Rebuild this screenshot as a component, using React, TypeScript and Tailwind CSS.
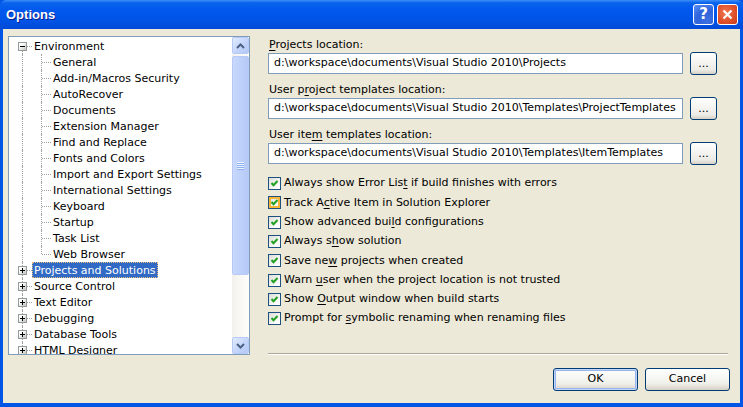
import React from 'react';

const FONT = "font-['Tahoma','DejaVu_Sans',sans-serif]";

type TreeRow = {
  label: string;
  level: 0 | 1;
  expander?: '+' | '-';
  last?: boolean;
  selected?: boolean;
};

const TREE: TreeRow[] = [
  { label: 'Environment', level: 0, expander: '-' },
  { label: 'General', level: 1 },
  { label: 'Add-in/Macros Security', level: 1 },
  { label: 'AutoRecover', level: 1 },
  { label: 'Documents', level: 1 },
  { label: 'Extension Manager', level: 1 },
  { label: 'Find and Replace', level: 1 },
  { label: 'Fonts and Colors', level: 1 },
  { label: 'Import and Export Settings', level: 1 },
  { label: 'International Settings', level: 1 },
  { label: 'Keyboard', level: 1 },
  { label: 'Startup', level: 1 },
  { label: 'Task List', level: 1 },
  { label: 'Web Browser', level: 1, last: true },
  { label: 'Projects and Solutions', level: 0, expander: '+', selected: true },
  { label: 'Source Control', level: 0, expander: '+' },
  { label: 'Text Editor', level: 0, expander: '+' },
  { label: 'Debugging', level: 0, expander: '+' },
  { label: 'Database Tools', level: 0, expander: '+' },
  { label: 'HTML Designer', level: 0, expander: '+' },
];

// label with one underlined mnemonic letter
function Mn({ text, at }: { text: string; at: number }) {
  return (
    <>
      {text.slice(0, at)}
      <span className="underline underline-offset-2">{text.charAt(at)}</span>
      {text.slice(at + 1)}
    </>
  );
}

const CHECKS: { text: string; at: number; hot?: boolean }[] = [
  { text: 'Always show Error List if build finishes with errors', at: 21 },
  { text: 'Track Active Item in Solution Explorer', at: 7, hot: true },
  { text: 'Show advanced build configurations', at: 17 },
  { text: 'Always show solution', at: 8 },
  { text: 'Save new projects when created', at: 7 },
  { text: 'Warn user when the project location is not trusted', at: 5 },
  { text: 'Show Output window when build starts', at: 5 },
  { text: 'Prompt for symbolic renaming when renaming files', at: 11 },
];

function Expander({ sign }: { sign: '+' | '-' }) {
  return (
    <div className="relative z-10 w-[9px] h-[9px] border border-[#919B9C] bg-[linear-gradient(135deg,#ffffff_30%,#c6c3b6_100%)] flex items-center justify-center">
      <div className="relative w-[5px] h-[5px]">
        <div className="absolute left-0 top-[2px] w-[5px] h-px bg-black" />
        {sign === '+' && <div className="absolute left-[2px] top-0 w-px h-[5px] bg-black" />}
      </div>
    </div>
  );
}

function Row({ row, index }: { row: TreeRow; index: number }) {
  const isFirst = index === 0;
  return (
    <div className="flex h-4 items-center shrink-0">
      {/* root level cell */}
      <div className="relative w-[19px] h-4 flex items-center justify-center">
        <div
          className={`absolute left-[9px] w-0 border-l border-dotted border-[#A0A0A0] ${
            isFirst ? 'top-[8px] bottom-0' : 'top-0 bottom-0'
          }`}
        />
        {row.level === 0 && (
          <div className="absolute left-[10px] right-0 top-[8px] h-0 border-t border-dotted border-[#A0A0A0]" />
        )}
        {row.expander && <Expander sign={row.expander} />}
      </div>
      {row.level === 1 && (
        <div className="relative w-[19px] h-4">
          <div
            className={`absolute left-[9px] w-0 border-l border-dotted border-[#A0A0A0] ${
              row.last ? 'top-0 h-[8px]' : 'top-0 bottom-0'
            }`}
          />
          <div className="absolute left-[10px] right-0 top-[8px] h-0 border-t border-dotted border-[#A0A0A0]" />
        </div>
      )}
      <div
        className={`h-4 px-[2px] flex items-center whitespace-nowrap leading-none ${
          row.selected
            ? 'bg-[#316AC5] text-white outline outline-1 outline-dotted outline-[#E8C080] -outline-offset-1'
            : 'text-black'
        }`}
      >
        {row.label}
      </div>
    </div>
  );
}

function ScrollArrow({ dir }: { dir: 'up' | 'down' }) {
  return (
    <div className="w-[17px] h-[17px] rounded-[2px] border border-[#B7CAF5] bg-[linear-gradient(135deg,#E2EBFE_0%,#C1D3FB_60%,#B4C8F6_100%)] flex items-center justify-center shrink-0">
      <svg width="9" height="6" viewBox="0 0 9 6">
        <polyline
          points={dir === 'up' ? '1,5 4.5,1.5 8,5' : '1,1 4.5,4.5 8,1'}
          fill="none"
          stroke="#4D6185"
          strokeWidth="2"
        />
      </svg>
    </div>
  );
}

function Scrollbar() {
  return (
    <div className="w-[17px] flex flex-col bg-[linear-gradient(to_right,#F3F1EC,#FEFEFB)] shrink-0">
      <ScrollArrow dir="up" />
      <div className="mt-[2px] h-[219px] rounded-[2px] border border-[#B7CAF5] bg-[linear-gradient(to_right,#C9D8FC,#BED1FB_50%,#B5C9F7)] flex items-center justify-center">
        <div className="flex flex-col gap-px">
          {[0, 1, 2, 3].map((i) => (
            <div key={i} className="w-[7px] h-px bg-[#EEF4FE] shadow-[0_1px_0_#8CB0F8]" />
          ))}
        </div>
      </div>
      <div className="flex-1" />
      <ScrollArrow dir="down" />
    </div>
  );
}

function CheckBox({ hot }: { hot?: boolean }) {
  return (
    <div className="w-[13px] h-[13px] border border-[#1C5180] bg-[linear-gradient(135deg,#DCDCD7_0%,#FFFFFF_85%)] shrink-0 relative">
      {hot && <div className="absolute inset-0 border-2 border-[#F8B636]" />}
      <svg className="absolute inset-0" width="11" height="11" viewBox="0 0 11 11">
        <polyline points="2.5,5 4.5,7.2 8.5,3" fill="none" stroke="#21A121" strokeWidth="2" />
      </svg>
    </div>
  );
}

function PathField({ label, value }: { label: React.ReactNode; value: string }) {
  return (
    <div className="flex flex-col">
      <div className="h-[13px] leading-[13px] pl-px mb-px">{label}</div>
      <div className="flex items-center gap-[7px]">
        <div className="w-[415px] h-[21px] border border-[#7F9DB9] bg-white flex items-center px-[5px] overflow-hidden whitespace-nowrap">
          {value}
        </div>
        <button className="w-[27px] h-[23px] rounded-[3px] border border-[#003C74] bg-[linear-gradient(to_bottom,#FFFFFF,#ECEBE6_80%,#D6D0C5)] flex items-end justify-center pb-[5px] leading-none">
          ...
        </button>
      </div>
    </div>
  );
}

function DlgButton({ children, def }: { children: React.ReactNode; def?: boolean }) {
  return (
    <button
      className={`w-[85px] h-[23px] rounded-[3px] border border-[#003C74] bg-[linear-gradient(to_bottom,#FFFFFF,#F0F0EA_70%,#D6D0C5)] flex items-center justify-center ${
        def ? 'shadow-[inset_0_0_0_1px_#C4D5FA,inset_0_0_0_2px_#98B6EE]' : ''
      }`}
    >
      {children}
    </button>
  );
}

export default function App() {
  return (
    <div className={`w-[743px] h-[407px] flex flex-col bg-[#0055E5] text-[11px] text-black ${FONT} overflow-hidden`}>
      {/* Title bar */}
      <div className="h-[29px] shrink-0 flex items-center pl-[6px] pr-[5px] rounded-t-[6px] bg-[linear-gradient(to_bottom,#3C8EF8_0%,#0A62EC_10%,#0058EE_35%,#0054E6_70%,#0049D6_100%)]">
        <span className="font-['Liberation_Sans',sans-serif] font-bold text-[13px] text-white [text-shadow:1px_1px_0_#0A1E8C]">
          Options
        </span>
        <div className="flex-1" />
        <div className="flex gap-[3px]">
          <div className="w-[21px] h-[21px] rounded-[3px] border border-white bg-[radial-gradient(circle_at_70%_80%,#3C6FE0,#2D63DC_50%,#5F90F6_100%)] flex items-center justify-center">
            <span className="font-['DejaVu_Sans',sans-serif] font-bold text-[15px] text-white leading-none">?</span>
          </div>
          <div className="w-[21px] h-[21px] rounded-[3px] border border-white bg-[radial-gradient(circle_at_40%_40%,#EE7850,#E0512B_55%,#C8391A_100%)] flex items-center justify-center">
            <svg width="11" height="11" viewBox="0 0 11 11">
              <path d="M1.5 1.5 L9.5 9.5 M9.5 1.5 L1.5 9.5" stroke="white" strokeWidth="2.2" />
            </svg>
          </div>
        </div>
      </div>

      {/* Client area */}
      <div className="flex-1 mx-[3px] mb-[4px] bg-[#ECE9D8] flex pt-[7px] pl-[5px] pb-[12px]">
        {/* Tree */}
        <div className="w-[242px] h-[319px] border border-[#7F9DB9] bg-white flex shrink-0">
          <div className="flex-1 flex flex-col pl-[4px] pt-px overflow-hidden">
            {TREE.map((row, i) => (
              <Row key={row.label} row={row} index={i} />
            ))}
          </div>
          <Scrollbar />
        </div>

        {/* Right pane */}
        <div className="w-[460px] ml-[18px] flex flex-col pt-[2px]">
          <div className="flex flex-col gap-[8px]">
            <PathField
              label={<Mn text="Projects location:" at={0} />}
              value="d:\workspace\documents\Visual Studio 2010\Projects"
            />
            <PathField
              label={<Mn text="User project templates location:" at={6} />}
              value="d:\workspace\documents\Visual Studio 2010\Templates\ProjectTemplates"
            />
            <PathField
              label={<Mn text="User item templates location:" at={8} />}
              value="d:\workspace\documents\Visual Studio 2010\Templates\ItemTemplates"
            />
          </div>

          <div className="mt-[9px] flex flex-col">
            {CHECKS.map((c) => (
              <div key={c.text} className="h-[19.3px] flex items-center">
                <CheckBox hot={c.hot} />
                <span className="ml-[3px] whitespace-nowrap">
                  <Mn text={c.text} at={c.at} />
                </span>
              </div>
            ))}
          </div>

          <div className="flex-1" />
          <div className="h-0 border-t border-[#ACA899] border-b border-b-white" />
          <div className="mt-[13px] -mr-[2px] flex justify-end gap-[7px]">
            <DlgButton def>OK</DlgButton>
            <DlgButton>Cancel</DlgButton>
          </div>
        </div>
      </div>
    </div>
  );
}
